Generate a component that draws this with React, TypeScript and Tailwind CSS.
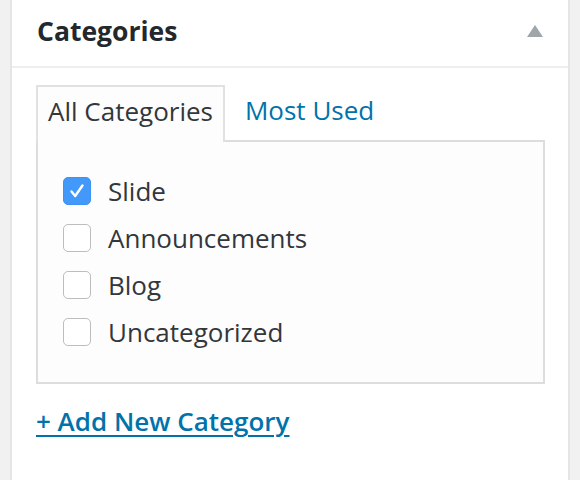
import React, { useState } from "react";

const categories = [
  { name: "Slide", checked: true },
  { name: "Announcements", checked: false },
  { name: "Blog", checked: false },
  { name: "Uncategorized", checked: false },
];

function Checkbox({ checked, onClick }: { checked: boolean; onClick: () => void }) {
  return (
    <button
      type="button"
      onClick={onClick}
      className={`w-[28px] h-[28px] rounded-[5px] flex items-center justify-center shrink-0 ${
        checked ? "bg-[#4399f9] border border-[#3d92f2]" : "bg-white border-[1.5px] border-[#bdbdbd]"
      }`}
    >
      {checked && (
        <svg width="20" height="20" viewBox="0 0 20 20" fill="none">
          <path d="M4.5 10.5 L8.2 15 L15.5 4.5" stroke="white" strokeWidth="2.4" strokeLinecap="round" strokeLinejoin="round" />
        </svg>
      )}
    </button>
  );
}

export default function App() {
  const [items, setItems] = useState(categories);
  const [tab, setTab] = useState("all");

  const toggle = (i: number) => {
    setItems(items.map((c, j) => (j === i ? { ...c, checked: !c.checked } : c)));
  };

  return (
    <div className="h-[480px] overflow-hidden bg-[#f1f1f1] px-[10px] font-['Open_Sans',sans-serif]">
      <div className="h-[480px] bg-white border-x-2 border-[#e5e5e5]">
        <div className="h-[68px] flex items-center justify-between pl-[25px] pr-[25px] border-b-2 border-[#eeeeee]">
          <h2 className="text-[26.5px] font-bold text-[#23282d] leading-none -mt-[3px]">Categories</h2>
          <svg width="16" height="12" viewBox="0 0 16 12" className="-mt-[4px]">
            <polygon points="8,0 16,12 0,12" fill="#a0a5aa" />
          </svg>
        </div>

        <div className="pl-[24px] pr-[23px] pt-[17px]">
          <div className="flex items-end">
            <button
              type="button"
              onClick={() => setTab("all")}
              className="h-[57px] px-[10px] pb-[7px] border-2 border-b-0 border-[#e1e1e1] bg-[#fdfdfd] text-[26px] text-[#32373c] relative z-10 leading-none"
            >
              All Categories
            </button>
            <button
              type="button"
              onClick={() => setTab("used")}
              className="h-[55px] pl-[20px] pb-[9px] text-[26px] text-[#0073aa] leading-none"
            >
              Most Used
            </button>
          </div>
          <div className="-mt-[2px] h-[244px] border-2 border-[#dddddd] bg-[#fdfdfd] pl-[25px] pt-[35px] flex flex-col gap-[19px]">
            {items.map((c, i) => (
              <label key={c.name} className="flex items-center gap-[17px] h-[28px] cursor-pointer">
                <Checkbox checked={c.checked} onClick={() => toggle(i)} />
                <span className="text-[26px] text-[#32373c] leading-none">{c.name}</span>
              </label>
            ))}
          </div>
          <a href="#" className="inline-block mt-[24px] text-[26px] leading-none font-semibold text-[#0073aa] underline underline-offset-[4px] decoration-[2px]">
            + Add New Category
          </a>
        </div>
      </div>
    </div>
  );
}
